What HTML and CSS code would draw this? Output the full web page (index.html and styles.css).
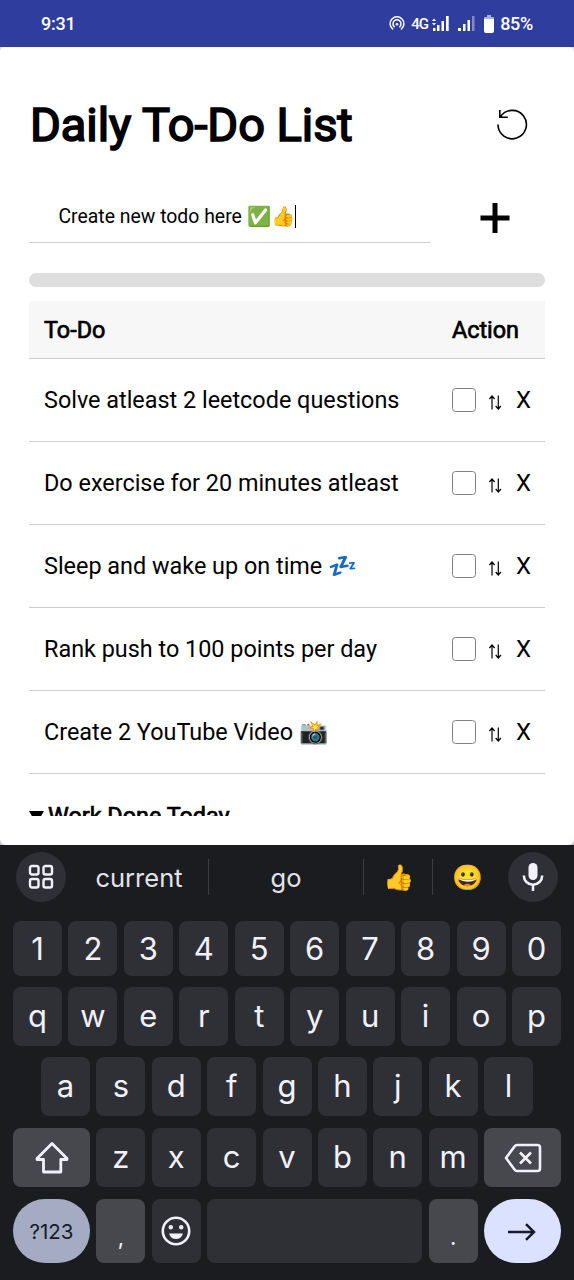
FILE: index.html
```html
<!DOCTYPE html>
<html lang="en">
<head>
<meta charset="utf-8">
<title>Daily To-Do List</title>
<link rel="stylesheet" href="styles.css">
</head>
<body>
<div class="phone">
  <header class="status">
    <span class="clock">9:31</span>
    <div class="indicators">
      <svg class="hotspot" width="16" height="16" viewBox="0 0 16 16" fill="none" stroke="#fff" stroke-width="1.5" stroke-linecap="round"><path d="M3.6 13A6.9 6.9 0 1 1 12.4 13M5.2 10.7A4 4 0 1 1 10.8 10.7"/><circle cx="8" cy="8.2" r="1.3" fill="#fff" stroke="none"/></svg>
      <span class="net">4G</span>
      <svg class="signal-a" width="18" height="16" viewBox="0 0 18 16" fill="#fff"><path d="M0 5L2 2.500L4 5ZM0 7L2 9.500L4 7ZM1 12h2.500v3H1zM5 9h2.500v6H5zM9.500 5H12v10H9.500zM14 0h2.700v15H14z"/></svg>
      <svg class="signal-b" width="17" height="15" viewBox="0 0 17 15" fill="#fff"><path d="M0 12h3v3H0zM5 8h2.500v7H5zM9.500 4H12v11H9.500z"/><path d="M14 0h2.500v15H14z" opacity=".4"/></svg>
      <svg class="battery" width="10" height="18" viewBox="0 0 10 18"><path d="M3 0h4v2h2q1 0 1 1v2H0V3q0-1 1-1h2z" fill="#a9afe0"/><path d="M0 4h10v12q0 2-2 2H2q-2 0-2-2z" fill="#fff"/></svg>
      <span class="percent">85%</span>
    </div>
  </header>

  <main class="app">
    <div class="scroll">
      <div class="title-row">
        <h1>Daily To-Do List</h1>
        <svg class="reset" width="32" height="32" viewBox="0 0 32 32" fill="none" stroke="#000" stroke-width="1.600"><path d="M2 16.500A14.200 14.200 0 1 0 4.500 8.500M3.800 2v7.200h8"/></svg>
      </div>
      <div class="entry">
        <div class="field"><span>Create new todo here ✅👍</span><i class="caret"></i></div>
        <svg class="add" width="30" height="30" viewBox="0 0 30 30"><path d="M12.500 0h5v12.500H29.500v5H17.500V30h-5V17.500H.5v-5h12z"/></svg>
      </div>
      <div class="progress"></div>
      <div class="table">
        <div class="row head"><span>To-Do</span><span>Action</span></div>
        <div class="row"><span>Solve atleast 2 leetcode questions</span><div class="actions"><i class="box"></i><svg class="sort" viewBox="0 0 13 15"><path d="M3 14.500V1M.4 4L3 1l2.600 3M9.300 0.500V14M6.700 11l2.600 3l2.600-3"/></svg><b>X</b></div></div>
        <div class="row"><span>Do exercise for 20 minutes atleast</span><div class="actions"><i class="box"></i><svg class="sort" viewBox="0 0 13 15"><path d="M3 14.500V1M.4 4L3 1l2.600 3M9.300 0.500V14M6.700 11l2.600 3l2.600-3"/></svg><b>X</b></div></div>
        <div class="row"><span>Sleep and wake up on time 💤</span><div class="actions"><i class="box"></i><svg class="sort" viewBox="0 0 13 15"><path d="M3 14.500V1M.4 4L3 1l2.600 3M9.300 0.500V14M6.700 11l2.600 3l2.600-3"/></svg><b>X</b></div></div>
        <div class="row"><span>Rank push to 100 points per day</span><div class="actions"><i class="box"></i><svg class="sort" viewBox="0 0 13 15"><path d="M3 14.500V1M.4 4L3 1l2.600 3M9.300 0.500V14M6.700 11l2.600 3l2.600-3"/></svg><b>X</b></div></div>
        <div class="row"><span>Create 2 YouTube Video 📸</span><div class="actions"><i class="box"></i><svg class="sort" viewBox="0 0 13 15"><path d="M3 14.500V1M.4 4L3 1l2.600 3M9.300 0.500V14M6.700 11l2.600 3l2.600-3"/></svg><b>X</b></div></div>
      </div>
      <div class="done"><svg width="15" height="13" viewBox="0 0 15 13"><path d="M0 0h15L7.500 13z"/></svg><span>Work Done Today</span></div>
    </div>
  </main>

  <section class="keyboard">
    <div class="suggest">
      <div class="round"><svg width="26" height="26" viewBox="0 0 26 26" fill="none" stroke="#f2f1fa" stroke-width="2.400"><rect x="2" y="2" width="8.500" height="8.500" rx="2"/><rect x="15.500" y="2" width="8.500" height="8.500" rx="2"/><rect x="2" y="15" width="8.500" height="8.500" rx="2"/><rect x="15.500" y="15" width="8.500" height="8.500" rx="2"/></svg></div>
      <span class="word first">current</span>
      <span class="word second">go</span>
      <span class="emoji thumb">👍</span>
      <span class="emoji grin">😀</span>
      <div class="round"><svg width="22" height="30" viewBox="0 0 22 30"><rect x="6.500" y="1" width="9" height="17" rx="4.500" fill="#f2f1fa"/><path d="M1.800 13.500a9.200 9.200 0 0 0 18.400 0M11 22.500V29" fill="none" stroke="#f2f1fa" stroke-width="2.500"/></svg></div>
    </div>
    <div class="keys digits"><span>1</span><span>2</span><span>3</span><span>4</span><span>5</span><span>6</span><span>7</span><span>8</span><span>9</span><span>0</span></div>
    <div class="keys"><span>q</span><span>w</span><span>e</span><span>r</span><span>t</span><span>y</span><span>u</span><span>i</span><span>o</span><span>p</span></div>
    <div class="keys home"><span>a</span><span>s</span><span>d</span><span>f</span><span>g</span><span>h</span><span>j</span><span>k</span><span>l</span></div>
    <div class="keys"><span class="wide"><svg width="36" height="34" viewBox="0 0 36 34" fill="none" stroke="#f2f1fa" stroke-width="2.800" stroke-linejoin="round"><path d="M18 2.500L33 17.500v1H26.800V31H9.500V18.500H3v-1z"/></svg></span><span>z</span><span>x</span><span>c</span><span>v</span><span>b</span><span>n</span><span>m</span><span class="wide"><svg width="38" height="30" viewBox="0 0 38 30" fill="none" stroke="#f2f1fa" stroke-width="2.600" stroke-linejoin="round"><path d="M2 15L10.500 3.500Q11.500 2 13 2H33.500Q36 2 36 4.500v21Q36 28 33.500 28H13Q11.500 28 10.500 26.500zM16 9.500l11 11M27 9.500l-11 11"/></svg></span></div>
    <div class="keys bottom"><span class="wide mode">?123</span><span class="punct">,</span><span><svg width="30" height="30" viewBox="0 0 30 30" fill="#f2f1fa"><circle cx="15" cy="15" r="13.200" fill="none" stroke="#f2f1fa" stroke-width="2.600"/><circle cx="9.800" cy="11.300" r="2.200"/><circle cx="20.200" cy="11.300" r="2.200"/><path d="M8 17.500h14q-1.800 5.500-7 5.500t-7-5.500z"/></svg></span><span class="space"></span><span class="punct">.</span><span class="wide enter"><svg width="28" height="18" viewBox="0 0 28 18" fill="none" stroke="#151b2c" stroke-width="2.500"><path d="M0 9h26M18 1.200L26 9L18 16.800"/></svg></span></div>
  </section>
</div>
</body>
</html>
```
FILE: styles.css
```css
* { box-sizing: border-box; }
body { margin: 0; font-family: Roboto, "Liberation Sans", sans-serif; color: #000; background: #1b1c20; }
svg { display: block; flex: none; }
.phone { width: 574px; height: 1280px; display: flex; flex-direction: column; overflow: hidden; }

.status { height: 47px; flex: none; background: #2f3d9f; color: #fff; display: flex; justify-content: space-between; align-items: center; padding: 0 41px; font-size: 18px; font-weight: 500; }
.clock { letter-spacing: -.2px; }
.indicators { display: flex; align-items: center; }
.net { font-size: 15px; font-weight: 500; letter-spacing: -1px; margin-left: 6px; width: 21px; }
.signal-b { margin-left: 8px; }
.battery { margin-left: 9px; }
.percent { margin-left: 6px; letter-spacing: -.3px; }

.app { height: 798px; flex: none; padding-bottom: 29px; background: #fff; border-radius: 5px 5px 6px 6px; }
.phone { background: linear-gradient(#dfe0ee 0 500px, #c9c9cc 500px 852px, #1b1c20 852px); }
.scroll { height: 769px; overflow: hidden; padding: 0 29px; }
.title-row { display: flex; justify-content: space-between; align-items: center; height: 113px; padding: 43px 17px 0 1px; }
h1 { margin: 0; font-size: 47px; font-weight: 400; line-height: 60px; letter-spacing: -.05px; -webkit-text-stroke: 1.700px #000; white-space: nowrap; }
.reset { margin-top: -3px; }
.entry { display: flex; align-items: center; justify-content: space-between; margin-top: 29px; padding-right: 35px; }
.field { width: 401px; height: 54px; border-bottom: 1px solid #ccc; padding: 1px 0 0 29.500px; display: flex; align-items: center; font-size: 19.400px; white-space: nowrap; }
.caret { width: 1.500px; height: 23px; background: #000; }
.add { margin-top: 3px; }
.progress { height: 14px; border-radius: 7px; background: #dedede; margin-top: 30px; }
.table { margin-top: 14px; }
.row { height: 83px; border-bottom: 1px solid #ccc; display: flex; align-items: center; justify-content: space-between; padding: 0 14px 0 15px; font-size: 23.400px; white-space: nowrap; }
.head { height: 58px; background: #f7f7f7; padding-right: 26px; -webkit-text-stroke: .7px #000; }
.actions { display: flex; align-items: center; }
.actions b { font-weight: 400; font-size: 24px; width: 15px; }
.box { width: 24px; height: 24px; border: 1.500px solid #808080; border-radius: 3.500px; margin-top: -1px; }
.sort { width: 13px; height: 15px; margin: 5px 14px 0 13px; fill: none; stroke: #000; stroke-width: 1.200; }
.done { display: flex; align-items: flex-start; gap: 4px; margin-top: 29px; font-size: 23.400px; line-height: 27px; -webkit-text-stroke: .7px #000; }
.done svg { margin-top: 8px; }

.keyboard { flex: 1; background: #1b1c20; padding: 0 13px; color: #f2f1fa; font-family: Inter, Roboto, sans-serif; }
.suggest { height: 64px; display: flex; align-items: center; padding: 0 3px; font-size: 25.500px; color: #e3e2e9; }
.round { width: 50px; height: 50px; border-radius: 50%; background: #2f3036; display: flex; align-items: center; justify-content: center; flex: none; }
.word, .emoji { height: 36px; display: flex; align-items: center; justify-content: center; border-right: 1px solid #3c3d43; }
.word.first { width: 143px; padding-left: 4px; }
.word.second { width: 155px; }
.emoji { width: 69px; font-size: 25px; }
.emoji.grin { width: 75px; border: 0; padding-right: 7px; }
.keys { display: flex; justify-content: space-between; height: 59px; margin-bottom: 12px; font-size: 31px; }
.keys > span { width: 49px; border-radius: 8px; background: #2f3036; display: flex; align-items: center; justify-content: center; padding-bottom: 3px; }
.digits { height: 55px; margin: 12px 0 11px; }
.digits > span { padding-bottom: 0; }
.digits + .keys { margin-bottom: 11px; }
.home { margin: 0 28px 12px; }
.keys > .wide { width: 77px; padding: 1px 0 0; background: #47484d; }
.bottom { height: 64px; }
.bottom > span { padding: 0; }
.bottom > .punct { background: #47484d; padding-top: 11px; font-size: 22px; }
.bottom > .space { width: 215px; }
.bottom > .mode { background: #a5abc3; color: #151b2c; border-radius: 32px; font-size: 20.500px; padding: 0; }
.bottom > .enter { background: #dbe2ff; border-radius: 32px; }
```
